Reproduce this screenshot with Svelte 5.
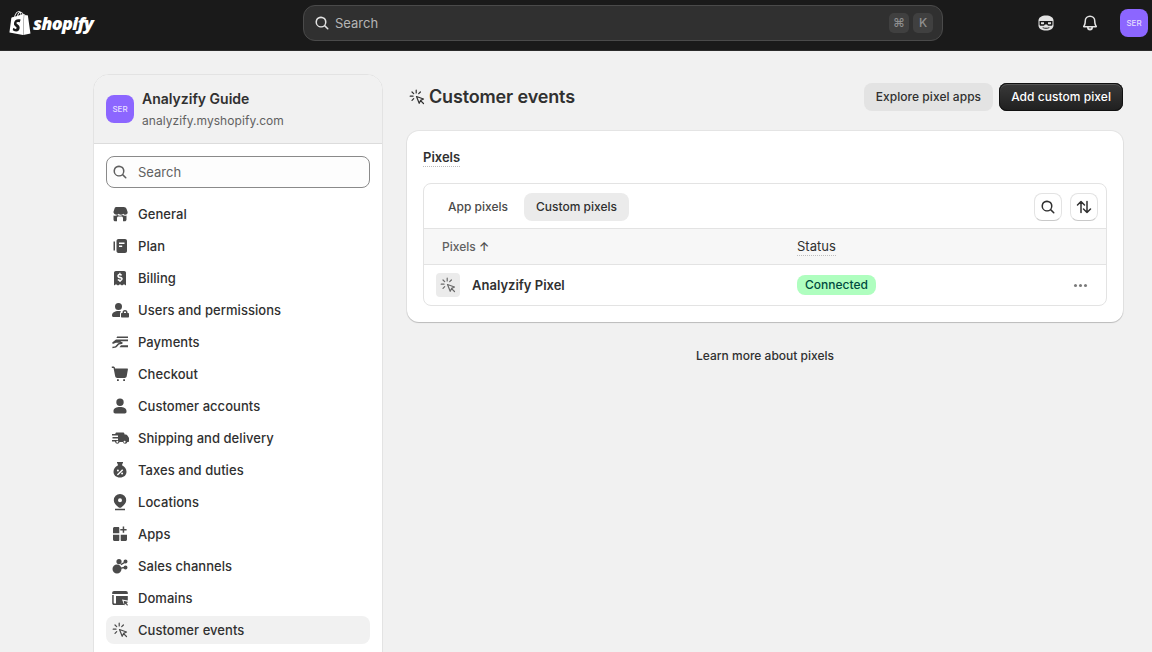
<script>
  const NAV = [
    { label: 'General', icon: 'M6.200 3h7.600c1.300 0 2.400.8 2.800 2l1 3c.4 1.500-.9 2.800-2.400 2.800-.9 0-1.300-.4-1.800-1-.6.600-1.500 1-2.400 1s-1.800-.4-2.400-1c-.5.600-.9 1-1.800 1C4.900 10.800 3.600 9.500 3.400 8l1-3c.4-1.200.5-2 1.800-2ZM3.500 11.500c.5.200 1 .3 1.500.3 1 0 1.800-.3 2.500-.8.700.5 1.600.8 2.500.8s1.800-.3 2.500-.8c.7.500 1.500.8 2.500.8.500 0 1-.1 1.500-.3v4c0 1-.8 1.800-1.800 1.800h-1.700v-3.300c0-.8-.7-1.500-1.500-1.500H8.500c-.8 0-1.500.7-1.500 1.500v3.300H5.300c-1 0-1.800-.8-1.800-1.800v-4Z' },
    { label: 'Plan', icon: 'M3.500 5.500H5v9H3.500v-9ZM8.500 3h6.500c1.200 0 2 .8 2 2v10c0 1.200-.8 2-2 2H8.500c-1.200 0-2-.8-2-2V5c0-1.200.8-2 2-2Zm.5 3.500v1.400h5.500V6.500H9Zm0 3v1.400h3.200V9.500H9Z', evenodd: true },
    { label: 'Billing', icon: 'M5.800 3h8.400c1 0 1.800.8 1.800 1.800V17.500l-2-1.200-2 1.200-2-1.200-2 1.200-2-1.200-2 1.200V4.800C4 3.800 4.800 3 5.800 3Zm3.500 1.800v1c-1.200.2-2 1.100-2 2.200 0 1.200.9 1.900 2.100 2.200l1.200.3c.5.100.7.300.7.600 0 .4-.4.600-1 .6-.7 0-1.400-.3-1.900-.8l-1 1.100c.5.500 1.200.9 1.900 1v1h1.400v-1c1.200-.2 2-1.100 2-2.200 0-1.200-.9-1.800-2-2.100l-1.200-.3c-.5-.1-.8-.3-.8-.6 0-.4.300-.6.900-.6.600 0 1.100.2 1.600.6l1-1.100c-.5-.4-1.100-.7-1.700-.9v-1H9.300Z', evenodd: true },
    { label: 'Users and permissions', icon: 'M8.500 3a3.500 3.500 0 1 1 0 7 3.500 3.500 0 0 1 0-7ZM2 15.500c0-2.900 2.800-4.500 6.500-4.500.9 0 1.700.1 2.500.3-.6.700-1 1.600-1 2.700v3H3.500C2.600 17 2 16.400 2 15.500ZM15 10a2.500 2.500 0 0 1 2.500 2.500v.5h.5c.6 0 1 .4 1 1v2.500c0 .6-.4 1-1 1h-6c-.6 0-1-.4-1-1V14c0-.6.400-1 1-1h.5v-.5A2.500 2.500 0 0 1 15 10Zm0 1.500c-.6 0-1 .4-1 1v.5h2v-.5c0-.6-.4-1-1-1Z', evenodd: true },
    { label: 'Payments', icon: 'M7.500 4.500H18V6H6.500c.2-.9.500-1.500 1-1.500ZM6 7.500h12v1.700h-6.500l-1.200.8h1.400c1.300 0 1.400 1.800.1 2l-2.800.5-2 2.200c-.6.600-1.300 1-2.100 1.100l-2.400.4-.2-1.400 2.300-.4c.5-.1.900-.3 1.200-.7l2.300-2.500 2.200-.4H6l-3.300 1.100-.5-1.300L6 7.500Zm5 5.700h7v2h-8.500L11 13.200Z' },
    { label: 'Checkout', icon: 'M1.800 2.500h1.400c.9 0 1.600.6 1.800 1.400l.1.600h12.100c.5 0 .8.400.7.900l-1.200 6.900c-.2 1-1 1.700-2 1.700H7.200c-1 0-1.800-.7-2-1.700L3.600 4.200c0-.1-.2-.2-.3-.2H1.800V2.500ZM7 15.300h1.800v1.700H7v-1.700Zm6.200 0H15v1.700h-1.800v-1.700Z' },
    { label: 'Customer accounts', icon: 'M10 2.500a3.700 3.700 0 1 1 0 7.400 3.700 3.700 0 0 1 0-7.400ZM3.500 15c0-2.800 2.900-4 6.500-4s6.500 1.200 6.500 4v.8c0 .9-.7 1.700-1.700 1.700H5.200c-1 0-1.700-.8-1.700-1.700V15Z' },
    { label: 'Shipping and delivery', icon: 'M6.500 4.500h6.500c.8 0 1.500.7 1.500 1.500v.5h1.400c.5 0 1 .2 1.300.7l1.400 2c.2.300.4.700.4 1.100v2.700c0 .6-.4 1-1 1h-.6a2.300 2.300 0 0 1-4.500 0H9.600a2.300 2.300 0 0 1-4.500 0H5V12h3v-1.500H2.500V9H8V7.500H2V6h3.300c0-.8.500-1.500 1.200-1.500ZM7.300 12.800a1 1 0 1 0 0 2 1 1 0 0 0 0-2Zm7.300 0a1 1 0 1 0 0 2 1 1 0 0 0 0-2ZM2 12h3v1.500H2V12Z', evenodd: true },
    { label: 'Taxes and duties', icon: 'M7 2h6v1.500h-.8v2.100c2.500 1 4.300 3.400 4.300 6.100 0 3.300-2.600 5.800-6.500 5.800s-6.500-2.500-6.500-5.800c0-2.700 1.800-5.100 4.300-6.100V3.500H7V2Zm.9 7.500a1 1 0 1 0 0 2 1 1 0 0 0 0-2Zm4.200 3a1 1 0 1 0 0 2 1 1 0 0 0 0-2Zm.1-3.300-5.300 5.300 1 1 5.300-5.300-1-1Z', evenodd: true },
    { label: 'Locations', icon: 'M10 2a6.200 6.200 0 0 1 6.200 6.200c0 2.700-2.100 5.200-5 7.200-.7.500-1.700.5-2.400 0-2.900-2-5-4.500-5-7.200A6.200 6.200 0 0 1 10 2Zm0 4.200a2 2 0 1 0 0 4 2 2 0 0 0 0-4ZM5 16.800h10v1.400H5v-1.400Z', evenodd: true },
    { label: 'Apps', icon: 'M4.500 3h3.800c.6 0 1 .5 1 1v5.300H3V4.500C3 3.700 3.700 3 4.500 3ZM3 10.800h6.300V16c0 .6-.4 1-1 1H4.500c-.8 0-1.500-.7-1.500-1.500v-4.700Zm7.700 0H17v4.700c0 .8-.7 1.500-1.500 1.500h-3.800c-.6 0-1-.4-1-1v-5.200Zm3.500-8.300v2.400h2.400v1.500h-2.400v2.400h-1.500V6.400h-2.400V4.900h2.400V2.500h1.500Z' },
    { label: 'Sales channels', icon: 'M9 3a2.600 2.600 0 1 1 0 5.200A2.600 2.600 0 0 1 9 3ZM15.500 3.500a2 2 0 1 1 0 4 2 2 0 0 1 0-4Zm0 6a2 2 0 1 1 0 4 2 2 0 0 1 0-4ZM7 8.500a4.500 4.500 0 1 1 0 9 4.500 4.500 0 0 1 0-9Zm3.500-.4 3.500-2 .6 1.200-3.500 2-.6-1.200Zm.5 3.300 3-.6.300 1.400-3 .6-.3-1.400Z' },
    { label: 'Domains', icon: 'M4 3h12c1 0 1.800.8 1.800 1.800V6H2.200V4.800C2.200 3.800 3 3 4 3ZM2.200 7h1.500v7.500c0 .6.3.9.9.9h3V17H4c-1 0-1.800-.8-1.800-1.800V7ZM6 8h11.800v4.500l-5.800-1 2.200 5.500H6.800c-.5 0-.8-.3-.8-.8V8Zm7.700 4.800 4.600 1.200-1.800 1 1.500 2-.9.700-1.500-2-1.100 1.700-.8-4.600Z' },
    { label: 'Customer events', active: true }
  ];
</script>

{#snippet searchIcon()}
  <svg viewBox="0 0 20 20" class="ico" aria-hidden="true"><path fill-rule="evenodd" d="M12.323 13.383a5.5 5.500 0 1 1 1.060-1.060l2.897 2.897a.75.75 0 1 1-1.060 1.060l-2.897-2.897Zm.677-4.133a4 4 0 1 1-8 0 4 4 0 0 1 8 0Z"/></svg>
{/snippet}

{#snippet eventsIcon()}
  <svg viewBox="0 0 20 20" class="ico line thin" aria-hidden="true">
    <path d="M9.200 3.200v2.800M3.200 9.200h2.800M5 5l1.700 1.700M13.400 5l-1.700 1.700M5 13.400l1.700-1.700"/>
    <path d="m9.500 9.500 7 2.500-2.900 1.400-1.400 2.900-2.700-6.800ZM13.800 13.800l2.700 2.700"/>
  </svg>
{/snippet}

<header class="topbar">
  <div class="logo">
    <svg viewBox="0 0 24 24" class="bag" aria-hidden="true"><path d="M15.337 23.979l7.216-1.561s-2.604-17.613-2.625-17.730c-.018-.116-.114-.192-.211-.192s-1.929-.136-1.929-.136-1.275-1.274-1.439-1.411c-.045-.037-.075-.057-.121-.074l-.914 21.104h.023zM11.710 11.305s-.810-.424-1.774-.424c-1.447 0-1.504.906-1.504 1.141 0 1.232 3.240 1.715 3.240 4.629 0 2.295-1.440 3.760-3.406 3.760-2.354 0-3.540-1.465-3.540-1.465l.646-2.086s1.245 1.066 2.280 1.066c.675 0 .975-.545.975-.932 0-1.619-2.654-1.694-2.654-4.359-.034-2.237 1.571-4.416 4.827-4.416 1.257 0 1.875.361 1.875.361l-.945 2.715-.020.010zM11.170.830c.136 0 .271.038.405.135-.984.465-2.064 1.639-2.508 3.992-.656.213-1.293.405-1.889.578C7.697 3.750 8.951.840 11.170.840V.830zm1.235 2.949v.135c-.754.232-1.583.484-2.394.736.466-1.777 1.333-2.645 2.085-2.971.193.501.309 1.176.309 2.100zm.539-2.234c.694.074 1.141.867 1.429 1.755-.349.114-.735.231-1.158.366v-.252c0-.752-.096-1.371-.271-1.871v.002zm2.992 1.289c-.020 0-.060.021-.078.021s-.289.075-.714.210c-.423-1.233-1.176-2.370-2.508-2.370h-.115C12.135.209 11.669 0 11.265 0 8.159 0 6.675 3.877 6.210 5.846c-1.194.365-2.063.636-2.160.674-.675.213-.694.232-.772.870-.075.462-1.830 14.063-1.830 14.063L15.009 24l.927-21.166z"/></svg>
    <span class="wordmark">shopify</span>
  </div>
  <div class="top-search">
    {@render searchIcon()}
    <span class="top-search-label">Search</span>
    <span class="keys"><kbd>⌘</kbd><kbd>K</kbd></span>
  </div>
  <div class="top-actions">
    <svg viewBox="0 0 20 20" class="ico sidekick" aria-hidden="true">
      <path d="M10 2.500c4.300 0 7.500 2 7.500 5v5c0 3-3.200 5-7.500 5s-7.500-2-7.500-5v-5c0-3 3.200-5 7.500-5Z"/>
      <path class="shade" d="M3.500 8h13v3.200c0 .9-.7 1.600-1.600 1.600h-2c-.9 0-1.500-.5-1.800-1.300H8.900c-.3.800-.9 1.300-1.800 1.300h-2c-.9 0-1.600-.7-1.600-1.600V8Z"/>
      <path d="M5 9.300h3v1.500c0 .3-.2.500-.5.500h-2c-.3 0-.5-.2-.5-.5V9.300Zm7 0h3v1.500c0 .3-.2.500-.5.500h-2c-.3 0-.5-.2-.5-.5V9.300Z"/>
      <path class="shade" d="M6.800 14.300c1.900.7 4.500.7 6.400 0l.3.700c-2 1-5 1-7 0l.3-.7Z"/>
    </svg>
    <svg viewBox="0 0 20 20" class="ico" aria-hidden="true"><path fill-rule="evenodd" d="M10 2.500a5.500 5.500 0 0 1 5.500 5.500c0 2.200.6 3.800 1.400 5 .4.700 0 1.500-.8 1.500H13a3 3 0 0 1-6 0H3.900c-.8 0-1.200-.8-.8-1.500.8-1.200 1.400-2.800 1.400-5A5.500 5.500 0 0 1 10 2.500Zm0 1.500a4 4 0 0 0-4 4c0 2-.4 3.700-1.100 5h10.200c-.7-1.300-1.100-3-1.100-5a4 4 0 0 0-4-4Zm-1.400 10.500a1.500 1.500 0 0 0 2.800 0H8.600Z"/></svg>
    <span class="avatar">SER</span>
  </div>
</header>

<div class="page">
  <aside class="sidebar">
    <div class="store">
      <span class="avatar">SER</span>
      <div class="store-text">
        <div class="store-name">Analyzify Guide</div>
        <div class="store-url">analyzify.myshopify.com</div>
      </div>
    </div>
    <div class="side-body">
      <div class="side-search">
        {@render searchIcon()}
        <span>Search</span>
      </div>
      <nav class="nav">
        {#each NAV as item}
          <div class="nav-item" class:active={item.active}>
            {#if item.icon}
              <svg viewBox="0 0 20 20" class="ico" aria-hidden="true"><path fill-rule={item.evenodd ? 'evenodd' : 'nonzero'} d={item.icon}/></svg>
            {:else}
              {@render eventsIcon()}
            {/if}
            <span>{item.label}</span>
          </div>
        {/each}
      </nav>
    </div>
  </aside>

  <main class="main">
    <div class="title-row">
      <h1>{@render eventsIcon()}Customer events</h1>
      <div class="title-actions">
        <button class="btn">Explore pixel apps</button>
        <button class="btn primary">Add custom pixel</button>
      </div>
    </div>

    <section class="card">
      <h2><span class="dotted">Pixels</span></h2>
      <div class="table">
        <div class="tabs">
          <div class="tab-list">
            <span class="tab">App pixels</span>
            <span class="tab selected">Custom pixels</span>
          </div>
          <div class="tools">
            <button class="tool" aria-label="Search">{@render searchIcon()}</button>
            <button class="tool" aria-label="Sort">
              <svg viewBox="0 0 20 20" class="ico line" aria-hidden="true"><path d="M7 15.500V4.500M3.500 8 7 4.500 10.500 8M13 4.500v11M9.500 12l3.500 3.500 3.500-3.500"/></svg>
            </button>
          </div>
        </div>
        <div class="row head">
          <span class="col-name">Pixels <span class="arrow">↑</span></span>
          <span class="col-status"><span class="dotted">Status</span></span>
        </div>
        <div class="row body">
          <span class="pixel">
            <span class="thumb">{@render eventsIcon()}</span>
            <strong>Analyzify Pixel</strong>
          </span>
          <span class="col-status"><span class="badge">Connected</span></span>
          <span class="more" aria-hidden="true"><i></i><i></i><i></i></span>
        </div>
      </div>
    </section>

    <div class="learn">Learn more about pixels</div>
  </main>
</div>

<style>
  :global(body) {
    background: #f1f1f1;
    font-family: Inter, "Noto Sans", sans-serif;
    font-size: 13px;
    color: #303030;
    height: 652px;
    overflow: hidden;
  }

  .ico {
    width: 20px;
    height: 20px;
    flex-shrink: 0;
    fill: currentColor;
    display: block;
  }

  .ico.line {
    fill: none;
    stroke: currentColor;
    stroke-width: 1.5;
    stroke-linecap: round;
    stroke-linejoin: round;
  }

  .ico.thin {
    stroke-width: 1.2;
  }

  .topbar {
    height: 51px;
    box-sizing: border-box;
    background: #1a1a1a;
    display: grid;
    grid-template-columns: 303px 640px 1fr;
    align-items: center;
    color: #e3e3e3;
    border-bottom: 1px solid #2b2b2b;
    padding-bottom: 5px;
  }

  .logo {
    display: flex;
    align-items: center;
    padding-left: 8px;
    color: #fff;
    gap: 1px;
  }

  .bag {
    width: 24px;
    height: 24px;
    fill: #fff;
  }

  .wordmark {
    font-family: "Open Sans", sans-serif;
    font-style: italic;
    font-weight: 800;
    font-size: 18px;
    letter-spacing: -0.7px;
    line-height: 24px;
  }

  .top-search {
    height: 36px;
    box-sizing: border-box;
    background: #303030;
    border: 1px solid #4a4a4a;
    border-radius: 12px;
    display: flex;
    align-items: center;
    padding: 0 9px 0 8px;
    gap: 3px;
    color: #b5b5b5;
    font-size: 13px;
  }

  .top-search .ico {
    color: #e3e3e3;
  }

  .top-search-label {
    flex: 1;
  }

  .keys {
    display: flex;
    gap: 4px;
  }

  kbd {
    width: 20px;
    height: 20px;
    border-radius: 5px;
    background: #404040;
    color: #8f8f8f;
    font-family: Inter, sans-serif;
    font-size: 12px;
    font-weight: 500;
    display: flex;
    align-items: center;
    justify-content: center;
  }

  .top-actions {
    display: flex;
    align-items: center;
    justify-content: flex-end;
    gap: 24px;
    padding-right: 4px;
  }

  .top-actions .avatar {
    margin-left: -4px;
  }

  .sidekick .shade {
    fill: #1a1a1a;
  }

  .avatar {
    width: 28px;
    height: 28px;
    border-radius: 8px;
    background: #8c66ff;
    color: #e6deff;
    font-size: 8px;
    font-weight: 500;
    display: flex;
    align-items: center;
    justify-content: center;
    flex-shrink: 0;
  }

  .page {
    display: flex;
    gap: 24px;
    padding: 23px 29px 0 93px;
    align-items: flex-start;
  }

  .sidebar {
    width: 290px;
    box-sizing: border-box;
    flex-shrink: 0;
    background: #fff;
    border: 1px solid #e3e3e3;
    border-radius: 16px 16px 0 0;
    overflow: hidden;
  }

  .store {
    height: 69px;
    box-sizing: border-box;
    background: #f1f1f1;
    border-bottom: 1px solid #dcdcdc;
    display: flex;
    align-items: center;
    gap: 8px;
    padding: 0 12px;
  }

  .store-text {
    display: flex;
    flex-direction: column;
    gap: 4px;
  }

  .store-name {
    font-size: 14px;
    font-weight: 600;
    line-height: 20px;
  }

  .store-url {
    font-size: 12px;
    letter-spacing: 0.06px;
    color: #616161;
    line-height: 16px;
  }

  .side-body {
    padding: 12px;
  }

  .side-search {
    height: 32px;
    box-sizing: border-box;
    border: 1px solid #8a8a8a;
    border-radius: 8px;
    background: #fdfdfd;
    display: flex;
    align-items: center;
    gap: 8px;
    padding: 0 3px;
    color: #616161;
    margin-bottom: 12px;
  }

  .side-search .ico {
    color: #5f5f5f;
  }

  .nav {
    display: flex;
    flex-direction: column;
    gap: 4px;
  }

  .nav-item {
    height: 28px;
    display: flex;
    align-items: center;
    gap: 8px;
    padding: 0 4px;
    border-radius: 8px;
    font-weight: 500;
    letter-spacing: 0.05px;
    color: #303030;
  }

  .nav-item .ico {
    color: #4a4a4a;
  }

  .nav-item.active {
    background: #f1f1f1;
    font-weight: 450;
  }

  .main {
    flex: 1;
    min-width: 0;
  }

  .title-row {
    display: flex;
    align-items: center;
    justify-content: space-between;
    height: 28px;
    margin: 9px 0 20px;
  }

  h1 {
    margin: 0;
    font-size: 18px;
    font-weight: 600;
    letter-spacing: -0.15px;
    line-height: 28px;
    display: flex;
    align-items: center;
    gap: 2px;
  }

  .title-actions {
    display: flex;
    gap: 6px;
  }

  .btn {
    height: 28px;
    padding: 0 12px 2px;
    border: 0;
    border-radius: 8px;
    font: 500 12px Inter, sans-serif;
    letter-spacing: 0.05px;
    background: #e3e3e3;
    color: #303030;
  }

  .btn.primary {
    background: linear-gradient(#3a3a3a, #1f1f1f);
    color: #fff;
    box-shadow: 0 0 0 1px #111 inset, 0 1px 0 1px #555 inset;
  }

  .card {
    background: #fff;
    border-radius: 12px;
    padding: 16px;
    box-shadow: 0 1px 1px #0000002e, 0 0 0 1px #0000000d;
  }

  h2 {
    margin: 0 0 16px;
    font-size: 13px;
    font-weight: 600;
    line-height: 20px;
  }

  .dotted {
    display: inline-block;
    line-height: 17px;
    border-bottom: 1px dotted #bdbdbd;
  }

  .table {
    border: 1px solid #e3e3e3;
    border-radius: 8px;
    overflow: hidden;
  }

  .tabs {
    height: 44px;
    display: flex;
    align-items: center;
    justify-content: space-between;
    padding: 2px 8px 0 12px;
    box-sizing: border-box;
  }

  .tab-list {
    display: flex;
    gap: 4px;
  }

  .tab {
    height: 28px;
    box-sizing: border-box;
    display: flex;
    align-items: center;
    padding: 0 12px 2px;
    border-radius: 8px;
    font-size: 12px;
    font-weight: 500;
    color: #4a4a4a;
  }

  .tab.selected {
    background: #ebebeb;
    color: #303030;
  }

  .tools {
    display: flex;
    gap: 8px;
  }

  .tool {
    width: 28px;
    height: 28px;
    padding: 0;
    display: flex;
    align-items: center;
    justify-content: center;
    background: #fff;
    border: 1px solid #e3e3e3;
    border-bottom-color: #c9c9c9;
    border-radius: 8px;
    color: #303030;
  }

  .row {
    display: grid;
    align-items: center;
    border-top: 1px solid #e3e3e3;
  }

  .head {
    height: 36px;
    box-sizing: border-box;
    background: #f7f7f7;
    font-size: 12px;
    color: #616161;
    font-weight: 500;
    padding-left: 18px;
    grid-template-columns: 355px 1fr;
  }

  .arrow {
    color: #4a4a4a;
  }

  .head .col-status {
    font-size: 13px;
    font-weight: 400;
    color: #303030;
  }

  .body {
    height: 41px;
    box-sizing: border-box;
    padding-left: 12px;
    grid-template-columns: 361px 1fr 52px;
  }

  .pixel {
    display: flex;
    align-items: center;
    gap: 12px;
  }

  .pixel strong {
    font-size: 13px;
    font-weight: 600;
  }

  .thumb {
    width: 24px;
    height: 24px;
    border-radius: 4px;
    background: #ebebeb;
    display: flex;
    align-items: center;
    justify-content: center;
    color: #6a6a6a;
  }

  .badge {
    display: inline-block;
    padding: 2px 8px;
    border-radius: 8px;
    background: #affebf;
    color: #014b40;
    font-size: 12px;
    font-weight: 500;
    line-height: 16px;
  }

  .more {
    display: flex;
    gap: 2px;
    justify-content: center;
  }

  .more i {
    width: 3px;
    height: 3px;
    border-radius: 50%;
    background: #7a7a7a;
  }

  .learn {
    margin-top: 24px;
    text-align: center;
    font-size: 12px;
    font-weight: 500;
    line-height: 20px;
  }
</style>
